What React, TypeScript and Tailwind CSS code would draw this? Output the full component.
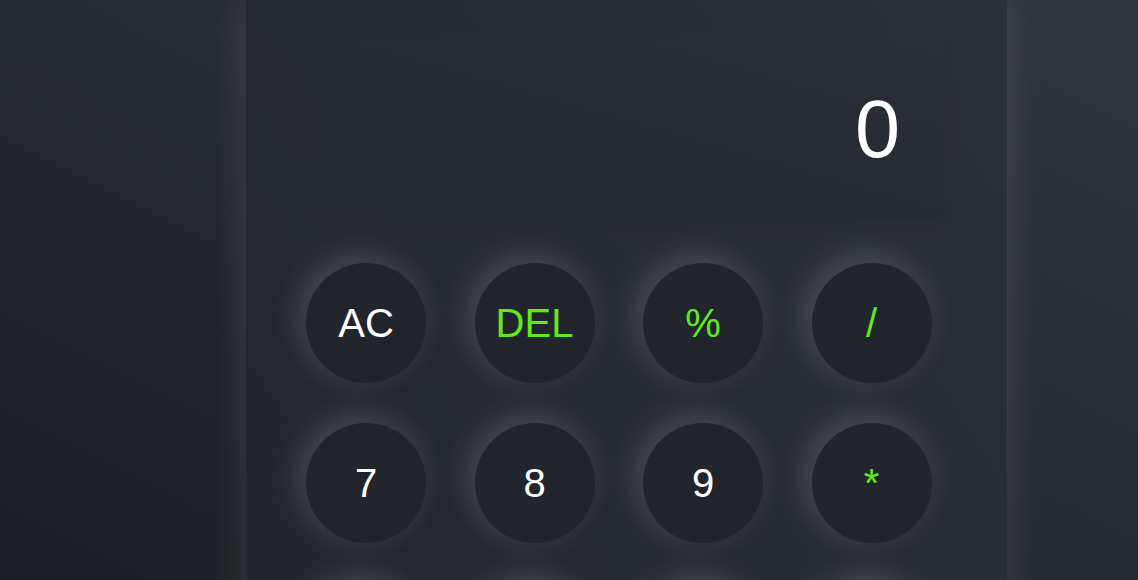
const keys: { label: string; accent?: boolean }[] = [
  { label: "AC" },
  { label: "DEL", accent: true },
  { label: "%", accent: true },
  { label: "/", accent: true },
  { label: "7" },
  { label: "8" },
  { label: "9" },
  { label: "*", accent: true },
  { label: "4" },
  { label: "5" },
  { label: "6" },
  { label: "-", accent: true },
  { label: "1" },
  { label: "2" },
  { label: "3" },
  { label: "+", accent: true },
  { label: "0" },
  { label: "." },
  { label: "=", accent: true },
];

function Key({ label, accent }: { label: string; accent?: boolean }) {
  return (
    <button
      className={
        "w-[120px] h-[120px] rounded-full bg-[#22252b] flex items-center justify-center text-[40px] leading-none " +
        "shadow-[-8px_-8px_36px_rgba(255,255,255,0.13),0_0_34px_rgba(255,255,255,0.07),6px_6px_14px_rgba(0,0,0,0.1)] " +
        (accent ? "text-[#62e81c]" : "text-white")
      }
    >
      {label}
    </button>
  );
}

export default function App() {
  return (
    <div className="h-screen overflow-hidden bg-[linear-gradient(to_top_right,#1b1e22,#252930_45%,#30353e)] font-['Liberation_Sans',Arial,sans-serif]">
      <div className="ml-[246px] w-[761px] min-h-[1200px] pt-[37px] pl-[59px] pr-[62px] bg-[linear-gradient(to_top_right,#212429,#252930_50%,#2b3039)] shadow-[0_0_36px_rgba(255,255,255,0.13)]">
        {/* display */}
        <div className="h-[184px] w-[640px] flex items-center justify-end pr-[45px] bg-[linear-gradient(to_top_right,#23272e,#2a2f38)] shadow-[0_0_16px_rgba(255,255,255,0.025),3px_3px_10px_rgba(0,0,0,0.05)]">
          <span className="text-white text-[81px] leading-none">0</span>
        </div>

        <div className="mt-[42px] ml-px grid grid-cols-[repeat(4,120px)] gap-x-[48.5px] gap-y-[40px]">
          {keys.map((k) => (
            <Key key={k.label} label={k.label} accent={k.accent} />
          ))}
        </div>
      </div>
    </div>
  );
}
